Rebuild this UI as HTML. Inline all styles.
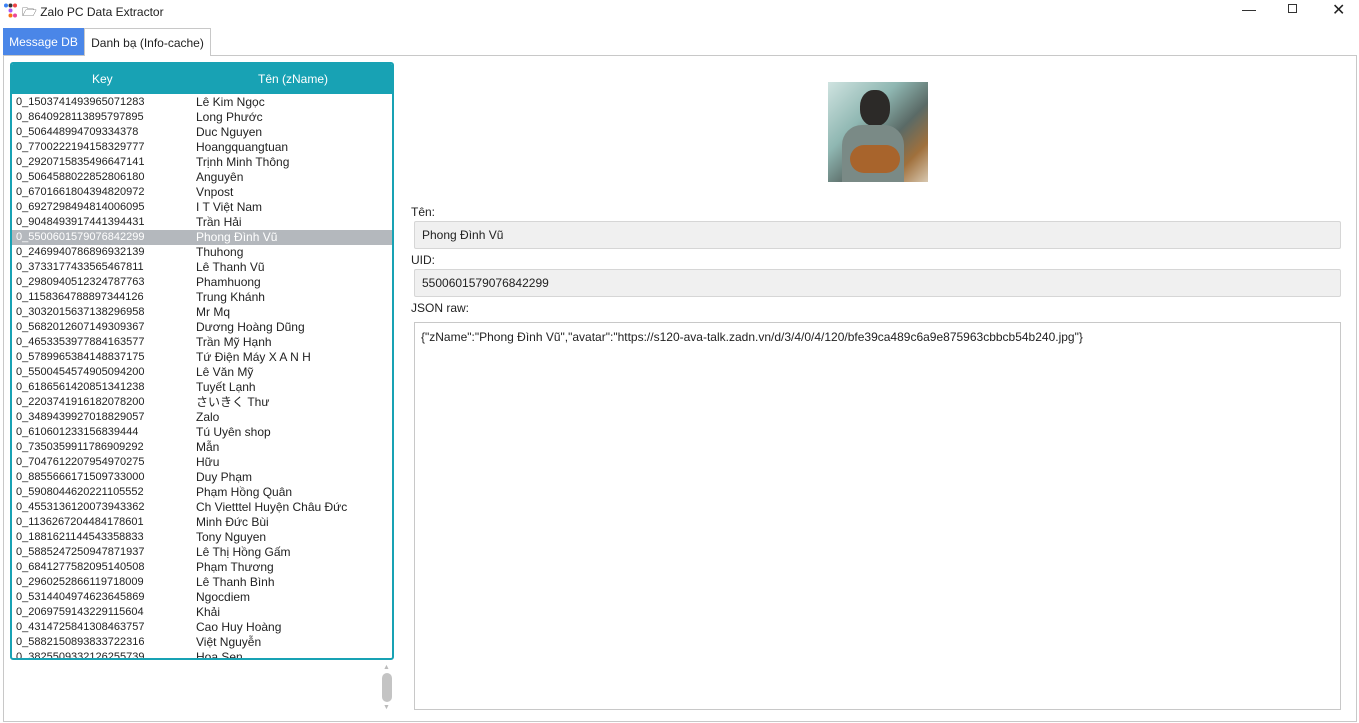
<!DOCTYPE html>
<html><head><meta charset="utf-8"><style>
*{margin:0;padding:0;box-sizing:border-box}
body{width:1359px;height:723px;background:#fff;font-family:"Liberation Sans","Noto Sans CJK JP",sans-serif;font-size:12px;color:#222;position:relative;overflow:hidden}
.a{position:absolute}
.row{height:15px;line-height:15px;white-space:nowrap;position:relative}
.row span{position:absolute}
.row .k{left:4px;font-size:11px}.row .n{left:184px}
.sel{background:#b4b8bd;color:#fff}
.fld{background:#f0f0f0;border:1px solid #d6d6d6;border-radius:2px;padding-left:7px;line-height:26px;font-size:12px}
</style></head><body>
<svg class="a" style="left:3px;top:3px" width="14" height="16"><circle cx="3" cy="2.5" r="2" fill="#3b82f6"/><circle cx="7.5" cy="2.5" r="2" fill="#333"/><circle cx="12" cy="2.5" r="2" fill="#ef4444"/><circle cx="7.5" cy="7.5" r="2" fill="#a855f7"/><circle cx="7.5" cy="12.5" r="2" fill="#f97316"/><circle cx="12" cy="12.5" r="2" fill="#ec4899"/></svg>
<div class="a" style="left:22px;top:3px;font-size:12px">🗁 Zalo PC Data Extractor</div>
<div class="a" style="left:1242px;top:1px;font-size:14px">&#8212;</div>
<div class="a" style="left:1288px;top:4px;width:9px;height:9px;border:1px solid #333"></div>
<div class="a" style="left:1332px;top:0px;font-size:16px">✕</div>
<div class="a" style="left:3px;top:55px;width:1354px;height:667px;border:1px solid #c8c8c8"></div>
<div class="a" style="left:3px;top:28px;width:81px;height:27px;background:#4a86e8;color:#fff;line-height:29px;text-align:center;font-size:12px">Message DB</div>
<div class="a" style="left:84px;top:28px;width:127px;height:28px;background:#fff;border:1px solid #c8c8c8;border-bottom:none;line-height:29px;text-align:center;font-size:12px">Danh bạ (Info-cache)</div>
<div class="a" style="left:10px;top:62px;width:384px;height:598px;border:2px solid #18a2b4;border-radius:3px;overflow:hidden">
<div style="height:30px;background:#18a2b4;color:#fff;position:relative;line-height:30px"><span class="a" style="left:80px">Key</span><span class="a" style="left:246px">Tên (zName)</span></div>
<div style="padding-top:1px">
<div class="row"><span class="k">0_1503741493965071283</span><span class="n">Lê Kim Ngọc</span></div>
<div class="row"><span class="k">0_8640928113895797895</span><span class="n">Long Phước</span></div>
<div class="row"><span class="k">0_506448994709334378</span><span class="n">Duc Nguyen</span></div>
<div class="row"><span class="k">0_7700222194158329777</span><span class="n">Hoangquangtuan</span></div>
<div class="row"><span class="k">0_2920715835496647141</span><span class="n">Trịnh Minh Thông</span></div>
<div class="row"><span class="k">0_5064588022852806180</span><span class="n">Anguyên</span></div>
<div class="row"><span class="k">0_6701661804394820972</span><span class="n">Vnpost</span></div>
<div class="row"><span class="k">0_6927298494814006095</span><span class="n">I T Việt Nam</span></div>
<div class="row"><span class="k">0_9048493917441394431</span><span class="n">Trần Hải</span></div>
<div class="row sel"><span class="k">0_5500601579076842299</span><span class="n">Phong Đình Vũ</span></div>
<div class="row"><span class="k">0_2469940786896932139</span><span class="n">Thuhong</span></div>
<div class="row"><span class="k">0_3733177433565467811</span><span class="n">Lê Thanh Vũ</span></div>
<div class="row"><span class="k">0_2980940512324787763</span><span class="n">Phamhuong</span></div>
<div class="row"><span class="k">0_1158364788897344126</span><span class="n">Trung Khánh</span></div>
<div class="row"><span class="k">0_3032015637138296958</span><span class="n">Mr Mq</span></div>
<div class="row"><span class="k">0_5682012607149309367</span><span class="n">Dương Hoàng Dũng</span></div>
<div class="row"><span class="k">0_4653353977884163577</span><span class="n">Trần Mỹ Hạnh</span></div>
<div class="row"><span class="k">0_5789965384148837175</span><span class="n">Tứ Điện Máy X A N H</span></div>
<div class="row"><span class="k">0_5500454574905094200</span><span class="n">Lê Văn Mỹ</span></div>
<div class="row"><span class="k">0_6186561420851341238</span><span class="n">Tuyết Lạnh</span></div>
<div class="row"><span class="k">0_2203741916182078200</span><span class="n">さいきく Thư</span></div>
<div class="row"><span class="k">0_3489439927018829057</span><span class="n">Zalo</span></div>
<div class="row"><span class="k">0_610601233156839444</span><span class="n">Tú Uyên shop</span></div>
<div class="row"><span class="k">0_7350359911786909292</span><span class="n">Mẫn</span></div>
<div class="row"><span class="k">0_7047612207954970275</span><span class="n">Hữu</span></div>
<div class="row"><span class="k">0_8855666171509733000</span><span class="n">Duy Phạm</span></div>
<div class="row"><span class="k">0_5908044620221105552</span><span class="n">Phạm Hồng Quân</span></div>
<div class="row"><span class="k">0_4553136120073943362</span><span class="n">Ch Vietttel Huyện Châu Đức</span></div>
<div class="row"><span class="k">0_1136267204484178601</span><span class="n">Minh Đức Bùi</span></div>
<div class="row"><span class="k">0_1881621144543358833</span><span class="n">Tony Nguyen</span></div>
<div class="row"><span class="k">0_5885247250947871937</span><span class="n">Lê Thị Hồng Gấm</span></div>
<div class="row"><span class="k">0_6841277582095140508</span><span class="n">Phạm Thương</span></div>
<div class="row"><span class="k">0_2960252866119718009</span><span class="n">Lê Thanh Bình</span></div>
<div class="row"><span class="k">0_5314404974623645869</span><span class="n">Ngocdiem</span></div>
<div class="row"><span class="k">0_2069759143229115604</span><span class="n">Khải</span></div>
<div class="row"><span class="k">0_4314725841308463757</span><span class="n">Cao Huy Hoàng</span></div>
<div class="row"><span class="k">0_5882150893833722316</span><span class="n">Việt Nguyễn</span></div>
<div class="row"><span class="k">0_3825509332126255739</span><span class="n">Hoa Sen</span></div>
</div></div>
<div class="a" style="left:383px;top:664px;font-size:7px;color:#bbb">▲</div>
<div class="a" style="left:382px;top:673px;width:10px;height:29px;background:#c4c4c4;border-radius:5px"></div>
<div class="a" style="left:383px;top:704px;font-size:7px;color:#bbb">▼</div>
<div class="a" style="left:828px;top:82px;width:100px;height:100px;background:linear-gradient(135deg,#cfe3e0 0%,#8fb7b2 35%,#5a6a66 60%,#a0703c 80%,#d8c8b0 100%)"></div>
<div class="a" style="left:860px;top:90px;width:30px;height:36px;border-radius:45%;background:#2c2a28"></div>
<div class="a" style="left:842px;top:125px;width:62px;height:57px;border-radius:20px 20px 0 0;background:#7a8a86"></div>
<div class="a" style="left:850px;top:145px;width:50px;height:28px;border-radius:14px;background:#a8642c"></div>
<div class="a" style="left:411px;top:205px">Tên:</div>
<div class="a fld" style="left:414px;top:221px;width:927px;height:28px">Phong Đình Vũ</div>
<div class="a" style="left:411px;top:253px">UID:</div>
<div class="a fld" style="left:414px;top:269px;width:927px;height:28px">5500601579076842299</div>
<div class="a" style="left:411px;top:301px">JSON raw:</div>
<div class="a" style="left:414px;top:322px;width:927px;height:388px;border:1px solid #c8c8c8;padding:7px 6px">{"zName":"Phong Đình Vũ","avatar":"https://s120-ava-talk.zadn.vn/d/3/4/0/4/120/bfe39ca489c6a9e875963cbbcb54b240.jpg"}</div>
</body></html>
